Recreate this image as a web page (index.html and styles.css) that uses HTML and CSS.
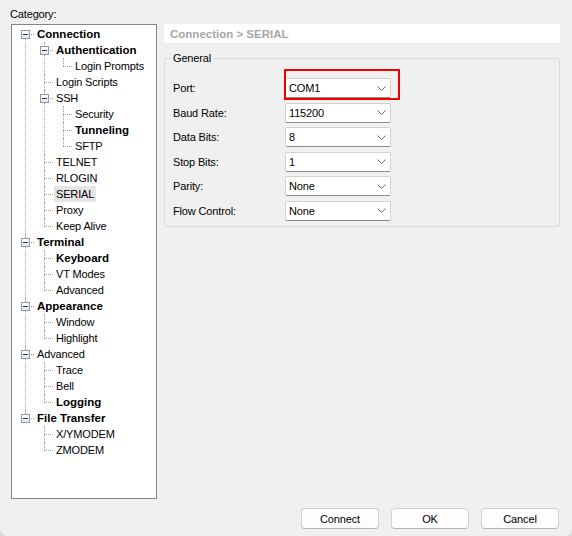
FILE: index.html
```html
<!DOCTYPE html>
<html lang="en">
<head>
<meta charset="UTF-8">
<meta name="viewport" content="width=device-width, initial-scale=1.0">
<title>Session Options</title>
<link rel="stylesheet" href="styles.css">
</head>
<body>
<div class="dialog">
  <div class="main">
    <div class="left-column">
      <div class="caption">Category:</div>
      <div class="tree-box">
        <ul class="tree">
          <li class="parent"><div class="node"><span class="toggle"></span><span class="label bold">Connection</span></div>
            <ul>
              <li class="parent"><div class="node"><span class="toggle"></span><span class="label bold">Authentication</span></div>
                <ul>
                  <li><div class="node"><span class="label">Login Prompts</span></div></li>
                </ul>
              </li>
              <li><div class="node"><span class="label">Login Scripts</span></div></li>
              <li class="parent"><div class="node"><span class="toggle"></span><span class="label">SSH</span></div>
                <ul>
                  <li><div class="node"><span class="label">Security</span></div></li>
                  <li><div class="node"><span class="label bold">Tunneling</span></div></li>
                  <li><div class="node"><span class="label">SFTP</span></div></li>
                </ul>
              </li>
              <li><div class="node"><span class="label">TELNET</span></div></li>
              <li><div class="node"><span class="label">RLOGIN</span></div></li>
              <li><div class="node"><span class="label selected">SERIAL</span></div></li>
              <li><div class="node"><span class="label">Proxy</span></div></li>
              <li><div class="node"><span class="label">Keep Alive</span></div></li>
            </ul>
          </li>
          <li class="parent"><div class="node"><span class="toggle"></span><span class="label bold">Terminal</span></div>
            <ul>
              <li><div class="node"><span class="label bold">Keyboard</span></div></li>
              <li><div class="node"><span class="label">VT Modes</span></div></li>
              <li><div class="node"><span class="label">Advanced</span></div></li>
            </ul>
          </li>
          <li class="parent"><div class="node"><span class="toggle"></span><span class="label bold">Appearance</span></div>
            <ul>
              <li><div class="node"><span class="label">Window</span></div></li>
              <li><div class="node"><span class="label">Highlight</span></div></li>
            </ul>
          </li>
          <li class="parent"><div class="node"><span class="toggle"></span><span class="label">Advanced</span></div>
            <ul>
              <li><div class="node"><span class="label">Trace</span></div></li>
              <li><div class="node"><span class="label">Bell</span></div></li>
              <li><div class="node"><span class="label bold">Logging</span></div></li>
            </ul>
          </li>
          <li class="parent"><div class="node"><span class="toggle"></span><span class="label bold">File Transfer</span></div>
            <ul>
              <li><div class="node"><span class="label">X/YMODEM</span></div></li>
              <li><div class="node"><span class="label">ZMODEM</span></div></li>
            </ul>
          </li>
        </ul>
      </div>
    </div>

    <div class="right-column">
      <div class="page-title">Connection &gt; SERIAL</div>
      <fieldset class="group">
        <legend>General</legend>
        <div class="form">
          <label>Port:</label>
          <div class="combo">COM1<svg class="arrow" width="9" height="5" viewBox="0 0 9 5"><polyline points="0.5,0.5 4.5,4.5 8.5,0.5"/></svg><span class="mark"></span></div>

          <label>Baud Rate:</label>
          <div class="combo">115200<svg class="arrow" width="9" height="5" viewBox="0 0 9 5"><polyline points="0.5,0.5 4.5,4.5 8.5,0.5"/></svg></div>

          <label>Data Bits:</label>
          <div class="combo">8<svg class="arrow" width="9" height="5" viewBox="0 0 9 5"><polyline points="0.5,0.5 4.5,4.5 8.5,0.5"/></svg></div>

          <label>Stop Bits:</label>
          <div class="combo">1<svg class="arrow" width="9" height="5" viewBox="0 0 9 5"><polyline points="0.5,0.5 4.5,4.5 8.5,0.5"/></svg></div>

          <label>Parity:</label>
          <div class="combo">None<svg class="arrow" width="9" height="5" viewBox="0 0 9 5"><polyline points="0.5,0.5 4.5,4.5 8.5,0.5"/></svg></div>

          <label>Flow Control:</label>
          <div class="combo">None<svg class="arrow" width="9" height="5" viewBox="0 0 9 5"><polyline points="0.5,0.5 4.5,4.5 8.5,0.5"/></svg></div>
        </div>
      </fieldset>
    </div>
  </div>

  <div class="buttons">
    <button>Connect</button>
    <button>OK</button>
    <button>Cancel</button>
  </div>
</div>
</body>
</html>
```

FILE: styles.css
```css
html, body {
  margin: 0;
  padding: 0;
  background: #dcdcdc;
}
body {
  font-family: "Liberation Sans", Arial, sans-serif;
  font-size: 11px;
  letter-spacing: -0.15px;
  color: #000;
}
.dialog {
  width: 572px;
  height: 536px;
  background: #f0f0f0;
  border-radius: 0 0 8px 8px;
  box-sizing: border-box;
}
.main {
  display: flex;
  gap: 6px;
  padding: 6px 12px 0 10px;
}

/* category tree */
.left-column {
  width: 148px;
}
.caption {
  line-height: 16px;
  margin-bottom: 2px;
}
.tree-box {
  margin-left: 1px;
  width: 146px;
  height: 475px;
  box-sizing: border-box;
  border: 1px solid #858585;
  background: #fff;
  padding-top: 1px;
  overflow: hidden;
}
.tree, .tree ul {
  list-style: none;
  margin: 0;
  padding: 0;
}
.tree {
  margin-left: 13px;
}
.tree ul {
  padding-left: 19px;
}
.tree li {
  position: relative;
}
/* connector lines */
.tree li::before {
  content: "";
  position: absolute;
  left: 0;
  top: 0;
  bottom: 0;
  border-left: 1px dotted #a0a0a0;
}
.tree li:last-child::before {
  bottom: auto;
  height: 8px;
}
.tree > li:first-child::before {
  top: 8px;
}
.tree li::after {
  content: "";
  position: absolute;
  left: 0;
  top: 8px;
  width: 9px;
  border-top: 1px dotted #a0a0a0;
}
.node {
  position: relative;
  height: 16px;
  line-height: 16px;
  white-space: nowrap;
}
.label {
  display: inline-block;
  margin-left: 10px;
  padding: 0 2px;
  position: relative;
  z-index: 1;
}
.label.bold {
  font-weight: bold;
  font-size: 11.5px;
  letter-spacing: 0;
}
.label.selected {
  background: #e5e5e5;
}
.toggle {
  position: absolute;
  left: -4px;
  top: 4px;
  width: 9px;
  height: 9px;
  box-sizing: border-box;
  border: 1px solid #8e99a8;
  background: linear-gradient(#ffffff, #e6e6e6);
  z-index: 2;
}
.toggle::after {
  content: "";
  position: absolute;
  left: 1px;
  top: 3px;
  width: 5px;
  height: 1px;
  background: #27335a;
}

/* settings page */
.right-column {
  flex: 1;
  padding-top: 18px;
}
.page-title {
  height: 19px;
  line-height: 20px;
  background: #fff;
  padding-left: 6px;
  font-weight: bold;
  font-size: 11.5px;
  letter-spacing: 0;
  color: #a6a6a6;
}
.group {
  margin: 7px 0 0 0;
  padding: 0 0 5px 8px;
  border: 1px solid #dadada;
  border-radius: 2px;
  min-width: 0;
}
.group legend {
  padding: 0 2px;
  margin-left: -2px;
  line-height: 16px;
}
.form {
  display: grid;
  grid-template-columns: 112px 106px;
  grid-auto-rows: 20px;
  row-gap: 4.5px;
  align-items: center;
  margin-top: 12px;
}
.form label {
  line-height: 20px;
}
.combo {
  position: relative;
  height: 20px;
  box-sizing: border-box;
  border: 1px solid #d2d2d2;
  border-bottom-color: #8c8c8c;
  border-radius: 2px;
  background: #fff;
  padding-left: 3px;
  line-height: 18px;
  display: flex;
  align-items: center;
  justify-content: space-between;
}
.arrow {
  margin-right: 4px;
  fill: none;
  stroke: #6a6a6a;
  stroke-width: 1;
}
/* red marker drawn over the port field */
.combo .mark {
  position: absolute;
  left: -2px;
  top: -10px;
  width: 116px;
  height: 31px;
  box-sizing: border-box;
  border: 2px solid #f00000;
  pointer-events: none;
}

/* bottom buttons */
.buttons {
  display: flex;
  justify-content: flex-end;
  gap: 12px;
  padding-right: 13px;
  margin-top: 9px;
}
.buttons button {
  width: 78px;
  height: 21px;
  box-sizing: border-box;
  border: 1px solid #d0d0d0;
  border-bottom-color: #b5b5b5;
  border-radius: 4px;
  background: #fdfdfd;
  font-family: "Liberation Sans", Arial, sans-serif;
  font-size: 11px;
  letter-spacing: -0.15px;
  color: #000;
  padding: 0;
}
```
